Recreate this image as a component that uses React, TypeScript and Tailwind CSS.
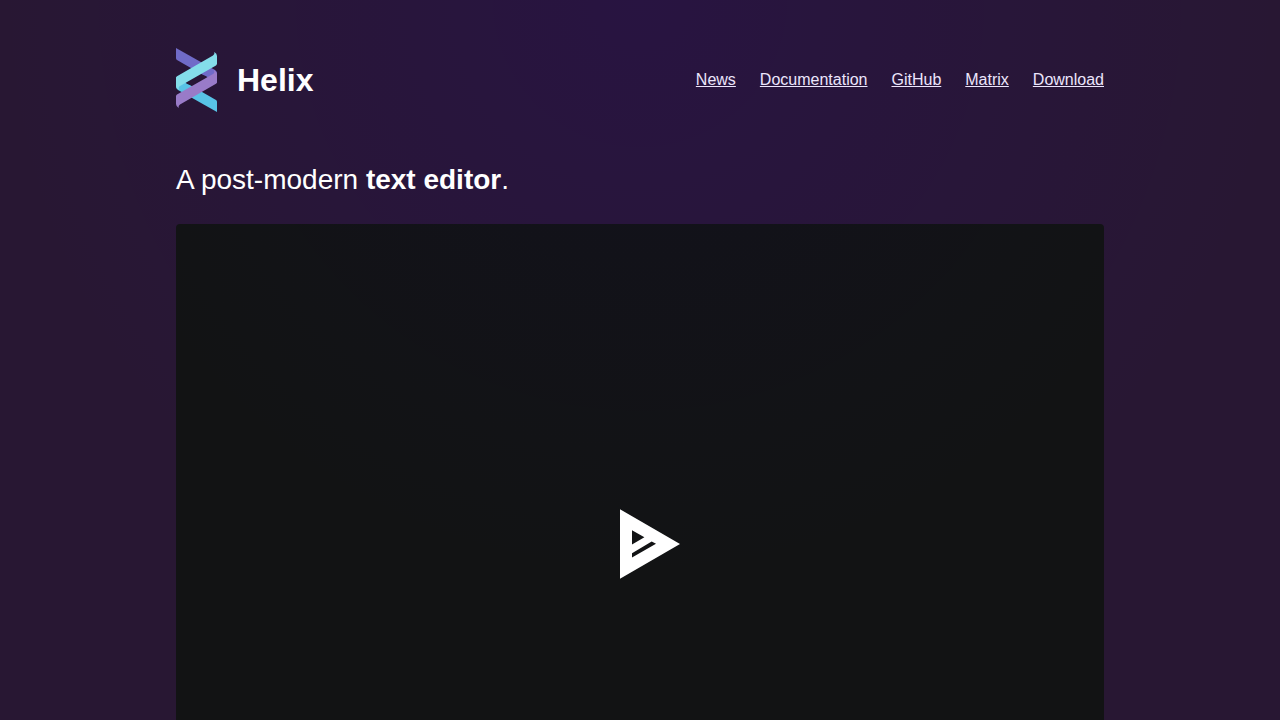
const NAV_LINKS = [
  { label: "News", href: "#news" },
  { label: "Documentation", href: "#docs" },
  { label: "GitHub", href: "#github" },
  { label: "Matrix", href: "#matrix" },
  { label: "Download", href: "#download" },
];

function Logo() {
  return (
    <svg className="h-16 w-[41px]" viewBox="0 0 41 64" aria-hidden="true">
      {/* back strands */}
      <path fill="#706bc8" d="M0 0 L39 22 Q41 23.3 41 25 V35 L1 12 Q0 11.4 0 10 Z" />
      <path fill="#58c3e6" d="M41 64 L2 42 Q0 40.7 0 39 V29 L40 52 Q41 52.6 41 54 Z" />
      {/* gap in the middle */}
      <path fill="#281636" d="M10 35.5 L25.5 26.5 L31 28.5 L15.5 37.5 Z" />
      {/* front strands */}
      <path fill="#84ddea" d="M38.3 4 Q41 5.5 41 8 V15.5 Q41 16.8 40 17.4 L4 38 Q1.5 39.5 3.5 42 Q0 40.5 0 37.5 V30 Q0 28.8 1 28.2 L37 7.6 Q39 6.3 38.3 4 Z" />
      <path fill="#997bc8" d="M2.7 60 Q0 58.5 0 56 V48.5 Q0 47.2 1 46.6 L37 26 Q39.5 24.5 37.5 22 Q41 23.5 41 26.5 V34 Q41 35.2 40 35.8 L4 56.4 Q2 57.7 2.7 60 Z" />
    </svg>
  );
}

function PlayIcon() {
  return (
    <svg className="size-20" viewBox="0 0 80 80" fill="white" aria-hidden="true">
      <path
        fillRule="evenodd"
        d="M20 5.3 L80 40 L20 74.7 Z M32 26.2 V40.4 L44.4 33.2 Z M32 49.2 V53.6 L56 39.8 L51.7 37.5 Z"
      />
    </svg>
  );
}

export default function App() {
  return (
    <div className="min-h-screen bg-[#281733] bg-[radial-gradient(circle_at_top,rgba(40,0,150,0.14),rgba(40,0,150,0)_640px)] font-['Liberation_Sans',Arial,sans-serif] text-white">
      <div className="mx-auto max-w-5xl px-12 py-12">
        <header className="flex flex-wrap items-center justify-between gap-6">
          <div className="flex items-center gap-5">
            <Logo />
            <h1 className="text-[32px] leading-10 font-bold">Helix</h1>
          </div>
          <nav className="flex flex-wrap gap-6">
            {NAV_LINKS.map((link) => (
              <a key={link.label} href={link.href} className="text-base text-[#ece5fc] underline hover:text-white">
                {link.label}
              </a>
            ))}
          </nav>
        </header>

        <main>
          <p className="mt-12 text-[28px] leading-10">
            A post-modern <strong>text editor</strong>.
          </p>
          {/* The page glow carries on faintly into the player */}
          <button
            type="button"
            aria-label="Play demo"
            className="mt-6 flex h-[640px] w-full cursor-pointer items-center justify-center rounded bg-[#121314] bg-[radial-gradient(circle_at_50%_-224px,rgba(20,0,120,0.09),rgba(20,0,120,0)_580px)]"
          >
            <PlayIcon />
          </button>
        </main>
      </div>
    </div>
  );
}
